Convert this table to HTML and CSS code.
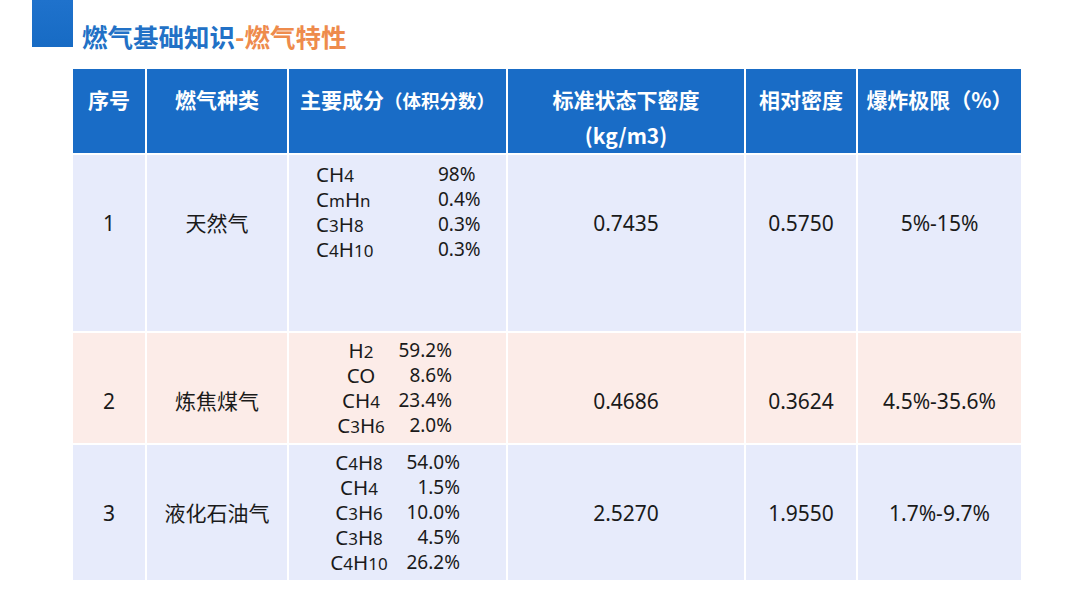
FILE: index.html
```html
<!DOCTYPE html>
<html lang="zh-CN">
<head>
<meta charset="utf-8">
<title>燃气基础知识-燃气特性</title>
<link rel="stylesheet" href="styles.css">
</head>
<body>
<header class="title-bar">
  <div class="title-mark"></div>
  <h1 class="title"><span class="title-blue">燃气基础知识</span><span class="title-orange">-燃气特性</span></h1>
</header>

<div class="grid">
  <div class="th">序号</div>
  <div class="th">燃气种类</div>
  <div class="th">主要成分<span class="th-small">（体积分数）</span></div>
  <div class="th">标准状态下密度<br>(kg/m3)</div>
  <div class="th">相对密度</div>
  <div class="th">爆炸极限（%）</div>

  <div class="td r1">1</div>
  <div class="td r1">天然气</div>
  <div class="td r1 comp comp1">
    <span class="f">CH<sub>4</sub></span><span class="p">98%</span>
    <span class="f">C<sub>m</sub>H<sub>n</sub></span><span class="p">0.4%</span>
    <span class="f">C<sub>3</sub>H<sub>8</sub></span><span class="p">0.3%</span>
    <span class="f">C<sub>4</sub>H<sub>10</sub></span><span class="p">0.3%</span>
  </div>
  <div class="td r1">0.7435</div>
  <div class="td r1">0.5750</div>
  <div class="td r1">5%-15%</div>

  <div class="td r2">2</div>
  <div class="td r2">炼焦煤气</div>
  <div class="td r2 comp comp2">
    <span class="f">H<sub>2</sub></span><span class="p">59.2%</span>
    <span class="f">CO</span><span class="p">8.6%</span>
    <span class="f">CH<sub>4</sub></span><span class="p">23.4%</span>
    <span class="f">C<sub>3</sub>H<sub>6</sub></span><span class="p">2.0%</span>
  </div>
  <div class="td r2">0.4686</div>
  <div class="td r2">0.3624</div>
  <div class="td r2">4.5%-35.6%</div>

  <div class="td r3">3</div>
  <div class="td r3">液化石油气</div>
  <div class="td r3 comp comp3">
    <span class="f">C<sub>4</sub>H<sub>8</sub></span><span class="p">54.0%</span>
    <span class="f">CH<sub>4</sub></span><span class="p">1.5%</span>
    <span class="f">C<sub>3</sub>H<sub>6</sub></span><span class="p">10.0%</span>
    <span class="f">C<sub>3</sub>H<sub>8</sub></span><span class="p">4.5%</span>
    <span class="f">C<sub>4</sub>H<sub>10</sub></span><span class="p">26.2%</span>
  </div>
  <div class="td r3">2.5270</div>
  <div class="td r3">1.9550</div>
  <div class="td r3">1.7%-9.7%</div>
</div>
</body>
</html>
```

FILE: styles.css
```css
* { box-sizing: border-box; }

html, body {
  margin: 0;
  padding: 0;
  background: #ffffff;
}

body {
  width: 1080px;
  height: 608px;
  overflow: hidden;
  font-family: "Noto Sans", "Noto Sans CJK SC", sans-serif;
  color: #1a1a1a;
}

.title-bar {
  display: flex;
  align-items: flex-end;
  padding-left: 32px;
  height: 47px;
}

.title-mark {
  width: 41px;
  height: 47px;
  background: linear-gradient(180deg, #1f72cc 0%, #176bc4 100%);
}

.title {
  margin: 0 0 0 9px;
  font-family: "Noto Sans CJK SC", sans-serif;
  font-size: 25.5px;
  font-weight: 700;
  line-height: 25px;
  position: relative;
  top: 1px;
  letter-spacing: 0;
}

.title-blue { color: #2271c6; }
.title-orange { color: #ee8b4c; }

.grid {
  margin: 22px 0 0 73px;
  width: 948px;
  display: grid;
  grid-template-columns: 72px 140px 217px 236px 110px 163px;
  grid-template-rows: 84px 176px 110px 135px;
  gap: 2px;
  background: #ffffff;
}

.th {
  background: #196cc6;
  color: #ffffff;
  font-family: "Noto Sans CJK SC", sans-serif;
  font-weight: 700;
  font-size: 21px;
  line-height: 36px;
  text-align: center;
  padding-top: 12px;
  white-space: nowrap;
}

.th-small {
  font-size: 18.5px;
}

.td {
  display: flex;
  align-items: flex-start;
  justify-content: center;
  padding-top: 53px;
  font-size: 21px;
  line-height: 30px;
  font-family: "Noto Sans", "Noto Sans CJK SC", sans-serif;
}

.r1, .r3 { background: #e7ebfb; }
.r2 { background: #fcece8; }

.comp {
  display: grid;
  align-content: center;
  justify-content: start;
  padding-top: 0;
  font-size: 19px;
  line-height: 25px;
}

.comp .f {
  font-size: 20.5px;
}

.comp sub {
  font-size: 17px;
  vertical-align: baseline;
  line-height: 0;
}

.comp1 {
  align-content: start;
  padding-top: 7px;
  padding-left: 27px;
  grid-template-columns: 122px 60px;
}
.comp1 .f, .comp1 .p { justify-self: start; }

.comp2 {
  padding-left: 43px;
  grid-template-columns: 58px 62px;
}
.comp2 .f { justify-self: center; }
.comp2 .p { justify-self: end; }

.comp3 {
  padding-left: 37px;
  grid-template-columns: 66px 68px;
}
.comp3 .f { justify-self: center; }
.comp3 .p { justify-self: end; }
```
